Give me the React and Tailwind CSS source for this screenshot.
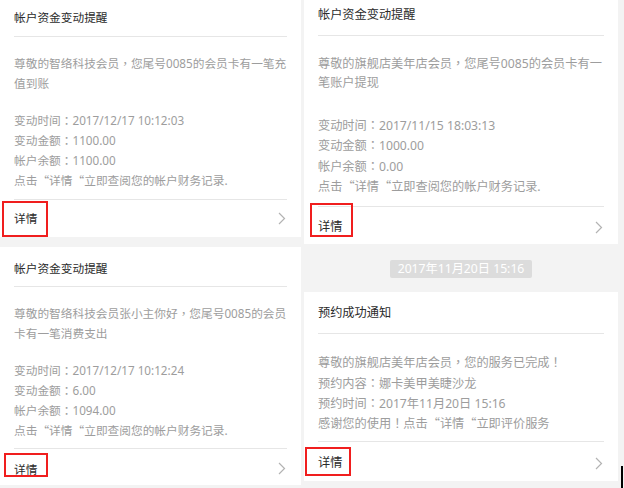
import React from 'react';

const Chevron = () => (
  <svg width="8" height="13" viewBox="0 0 8 13" className="shrink-0">
    <polyline points="1,1 6.5,6.5 1,12" fill="none" stroke="#b3b3b3" strokeWidth="1.2" />
  </svg>
);

// full-width punctuation sits centred in its cell in the screenshot
function Line({ text }) {
  const parts = text.split(/([，：！“])/);
  return (
    <p className="h-[1lh] whitespace-nowrap">
      {parts.map((part, i) =>
        part === '“' ? (
          <span key={i} className="font-['Noto_Sans_CJK_SC',sans-serif]">{part}</span>
        ) : /[，：！]/.test(part) ? (
          <span key={i} className="font-['Noto_Sans_CJK_TC',sans-serif]">{part}</span>
        ) : (
          part
        )
      )}
    </p>
  );
}

function Card({ className, title, titleBox, bodyBox, body, info, infoBox, footBox, redBox, size }) {
  return (
    <div className={`relative bg-white px-[14px] ${size} ${className}`}>
      <div className={`border-b border-[#e6e6e6] text-[#2b2b2b] ${titleBox}`}>{title}</div>
      <div className={`border-b border-[#e6e6e6] text-[#9d9d9d] ${bodyBox}`}>
        {body.map((line) => (
          <Line key={line} text={line} />
        ))}
        {info ? (
          <div className={infoBox}>
            {info.map((line) => (
              <Line key={line} text={line} />
            ))}
          </div>
        ) : null}
      </div>
      <div className={`flex items-center justify-between pr-[1px] text-[#2b2b2b] ${footBox}`}>
        <span>详情</span>
        <Chevron />
      </div>
      <div className={`absolute border-2 border-[#f01e1e] ${redBox}`} />
    </div>
  );
}

export default function App() {
  return (
    <div className="relative flex h-[488px] w-[624px] gap-[3px] overflow-hidden bg-[#f3f3f3] font-['Noto_Sans','Noto_Sans_CJK_SC',sans-serif] leading-[20px]">
      <div className="flex w-[301px] shrink-0 flex-col gap-[10px]">
        <Card
          size="text-[11.7px]"
          className="h-[237px]"
          title="帐户资金变动提醒"
          titleBox="pt-[7px] pb-[9px]"
          bodyBox="pt-[16px] pb-[9px]"
          body={['尊敬的智络科技会员，您尾号0085的会员卡有一笔充', '值到账']}
          infoBox="pt-[17px]"
          info={['变动时间：2017/12/17 10:12:03', '变动金额：1100.00', '帐户余额：1100.00', '点击“详情“立即查阅您的帐户财务记录.']}
          footBox="h-[37px] pb-[1px]"
          redBox="left-[2px] top-[201px] h-[36px] w-[46px]"
        />
        <Card
          size="text-[11.7px]"
          className="h-[238px]"
          title="帐户资金变动提醒"
          titleBox="pt-[11px] pb-[8px]"
          bodyBox="pt-[16px] pb-[8px]"
          body={['尊敬的智络科技会员张小主你好，您尾号0085的会员', '卡有一笔消费支出']}
          infoBox="pt-[17px]"
          info={['变动时间：2017/12/17 10:12:24', '变动金额：6.00', '帐户余额：1094.00', '点击“详情“立即查阅您的帐户财务记录.']}
          footBox="h-[36px] pt-[3px]"
          redBox="left-[4px] top-[206px] h-[24px] w-[44px]"
        />
      </div>

      <div className="flex w-[314px] shrink-0 flex-col">
        <Card
          size="text-[12.2px] leading-[20.5px]"
          className="h-[244px]"
          title="帐户资金变动提醒"
          titleBox="pt-[5px] pb-[9px]"
          bodyBox="pt-[17px] pb-[9px]"
          body={['尊敬的旗舰店美年店会员，您尾号0085的会员卡有一', '笔账户提现']}
          infoBox="pt-[21px]"
          info={['变动时间：2017/11/15 18:03:13', '变动金额：1000.00', '帐户余额：0.00', '点击“详情“立即查阅您的帐户财务记录.']}
          footBox="h-[38px] pt-[4px]"
          redBox="left-[6px] top-[203px] h-[34px] w-[43px]"
        />
        <div className="flex h-[48px] items-center justify-center pt-[1px]">
          <span className="rounded-[2px] bg-[#dcdcdc] px-[8px] text-[12.2px] leading-[18px] text-white">2017年11月20日 15:16</span>
        </div>
        <Card
          size="text-[12.2px] leading-[20.3px]"
          className="h-[189px]"
          title="预约成功通知"
          titleBox="pt-[11px] pb-[10px]"
          bodyBox="pt-[18px] pb-[8px]"
          body={['尊敬的旗舰店美年店会员，您的服务已完成！', '预约内容：娜卡美甲美睫沙龙', '预约时间：2017年11月20日 15:16', '感谢您的使用！点击“详情“立即评价服务']}
          footBox="h-[38px] pt-[4px]"
          redBox="left-[1px] top-[155px] h-[29px] w-[46px]"
        />
      </div>

      <div className="absolute left-[621px] top-[466px] h-[22px] w-[2px] bg-black" />
    </div>
  );
}
